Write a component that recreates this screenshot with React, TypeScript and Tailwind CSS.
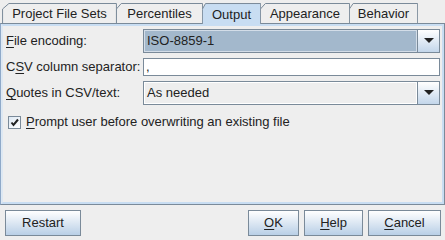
import React from 'react';

const tabs = [
  { label: 'Project File Sets', w: 'w-[115px]' },
  { label: 'Percentiles', w: 'w-[87px]' },
  { label: 'Output', w: 'w-[59px]', active: true },
  { label: 'Appearance', w: 'w-[90px]' },
  { label: 'Behavior', w: 'w-[69px]' },
];

const Tab: React.FC<{ label: string; w: string; active?: boolean }> = ({ label, w, active }) => (
  <div className={`relative h-[20px] ${w} -mr-px flex items-center justify-center ${active ? 'z-10 h-[21px] -mb-px' : ''}`}>
    <svg className="absolute inset-0 w-full h-full" preserveAspectRatio="none" viewBox="0 0 100 20">
      <path
        d="M0.5 20 L0.5 6 L6 0.5 L99.5 0.5 L99.5 20"
        fill={active ? '#c8ddf2' : '#eeeeee'}
        stroke="#7a8a99"
        strokeWidth="1"
        vectorEffect="non-scaling-stroke"
      />
    </svg>
    <span className="relative text-[13px] text-[#222] leading-none pt-px">{label}</span>
  </div>
);

const Arrow: React.FC = () => (
  <div className="w-[22px] h-full border-l border-[#7a8a99] bg-gradient-to-b from-white to-[#c3d6ea] flex items-center justify-center">
    <svg width="10" height="6" viewBox="0 0 10 6">
      <path d="M0 0 L10 0 L5 5 Z" fill="#222" />
    </svg>
  </div>
);

const U: React.FC<{ children: React.ReactNode }> = ({ children }) => (
  <span className="underline underline-offset-2">{children}</span>
);

const Button: React.FC<{ w: string; children: React.ReactNode }> = ({ w, children }) => (
  <div className={`${w} h-[26px] border border-[#7a8a99] bg-gradient-to-b from-white to-[#b9cfe6] flex items-center justify-center text-[13px] text-[#222]`}>
    {children}
  </div>
);

export default function App() {
  return (
    <div className="w-[445px] h-[240px] bg-[#eeeeee] flex flex-col font-['Liberation_Sans',Arial,sans-serif] text-[#222] overflow-hidden">
      <div className="flex pl-[2px] pt-[3px] h-[23px]">
        {tabs.map((t) => (
          <Tab key={t.label} {...t} />
        ))}
      </div>
      <div className="h-[182px] border border-[#7a8a99] border-l-[#8fa9c8]">
        <div className="h-full border-2 border-[#c8ddf2] border-l-[#dde8f3] flex flex-col pl-[3px] pr-[2px] pt-[3px]">
          <div className="flex items-center h-[24px]">
            <div className="w-[137px] text-[13px]"><U>F</U>ile encoding:</div>
            <div className="flex-1 h-full border border-[#7a8a99] flex">
              <div className="flex-1 bg-[#a3b8cc] border border-[#d3dde8] flex items-center pl-[2px] text-[13px]">ISO-8859-1</div>
              <Arrow />
            </div>
          </div>
          <div className="flex items-center h-[18px] mt-[5px]">
            <div className="w-[137px] text-[13px]">C<U>S</U>V column separator:</div>
            <div className="flex-1 h-full border border-[#7a8a99] bg-white flex items-center pl-[2px] text-[13px]">,</div>
          </div>
          <div className="flex items-center h-[24px] mt-[5px]">
            <div className="w-[137px] text-[13px]"><U>Q</U>uotes in CSV/text:</div>
            <div className="flex-1 h-full border border-[#7a8a99] flex">
              <div className="flex-1 bg-[#eeeeee] border border-[#ffffff] flex items-center pl-[2px] text-[13px]">As needed</div>
              <Arrow />
            </div>
          </div>
          <div className="flex items-center mt-[8px] pl-[2px] h-[18px]">
            <div className="w-[13px] h-[13px] border border-[#7a8a99] bg-gradient-to-br from-[#dde8f3] to-white flex items-center justify-center">
              <svg width="9" height="9" viewBox="0 0 9 9">
                <path d="M1.5 4.5 L3.5 7 L8 1.5" fill="none" stroke="#222" strokeWidth="2" />
              </svg>
            </div>
            <span className="ml-[5px] text-[13px]"><U>P</U>rompt user before overwriting an existing file</span>
          </div>
        </div>
      </div>
      <div className="flex items-center pl-[5px] pr-[4px] pt-[5px]">
        <Button w="w-[76px]">Restart</Button>
        <div className="flex-1" />
        <div className="flex gap-[5px]">
          <Button w="w-[51px]"><U>O</U>K</Button>
          <Button w="w-[59px]"><U>H</U>elp</Button>
          <Button w="w-[73px]"><U>C</U>ancel</Button>
        </div>
      </div>
    </div>
  );
}
